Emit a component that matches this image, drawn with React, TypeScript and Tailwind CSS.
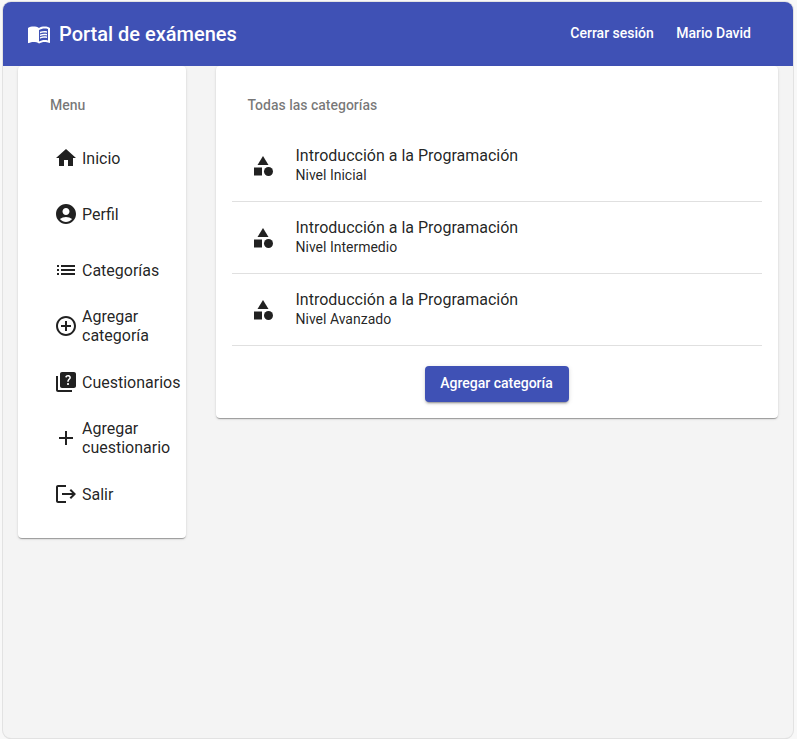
import type { IconType } from 'react-icons';
import {
  MdHome,
  MdAccountCircle,
  MdList,
  MdAddCircleOutline,
  MdQuiz,
  MdAdd,
  MdLogout,
  MdCategory,
} from 'react-icons/md';

const menu: { label: string; Icon: IconType }[] = [
  { label: 'Inicio', Icon: MdHome },
  { label: 'Perfil', Icon: MdAccountCircle },
  { label: 'Categorías', Icon: MdList },
  { label: 'Agregar categoría', Icon: MdAddCircleOutline },
  { label: 'Cuestionarios', Icon: MdQuiz },
  { label: 'Agregar cuestionario', Icon: MdAdd },
  { label: 'Salir', Icon: MdLogout },
];

const levels = ['Nivel Inicial', 'Nivel Intermedio', 'Nivel Avanzado'];

const cardShadow =
  'shadow-[0_2px_1px_-1px_rgba(0,0,0,0.2),0_1px_1px_0_rgba(0,0,0,0.14),0_1px_3px_0_rgba(0,0,0,0.12)]';

// Open book with a solid left page and lines of text on the right one.
function BookIcon() {
  return (
    <svg viewBox="0 0 24 24" fill="currentColor" className="size-6" aria-hidden="true">
      <path d="M6.5 4.5C4.55 4.5 2.45 4.9 1 6v14.65c0 .25.25.5.5.5.1 0 .15-.05.25-.05C3.1 20.45 5.05 20 6.5 20c1.95 0 4.05.4 5.5 1.5V6c-1.45-1.1-3.55-1.5-5.5-1.5z" />
      <path d="M21 5c-1.11-.35-2.33-.5-3.5-.5-1.95 0-4.05.4-5.5 1.5v15.5c1.35-.85 3.8-1.5 5.5-1.5 1.65 0 3.35.3 4.75 1.05.1.05.15.05.25.05.25 0 .5-.25.5-.5V6c-.6-.45-1.25-.75-2-1zm0 13.5c-1.1-.35-2.3-.5-3.5-.5-1.7 0-4.15.65-5.5 1.5V8c1.35-.85 3.8-1.5 5.5-1.5 1.2 0 2.4.15 3.5.5v11.5z" fillRule="evenodd" />
      <path d="M17.5 10.5c.88 0 1.73.09 2.5.26V9.24c-.79-.15-1.64-.24-2.5-.24-1.7 0-3.24.29-4.5.83v1.66c1.13-.64 2.7-.99 4.5-.99zM13 12.49v1.66c1.13-.64 2.7-.99 4.5-.99.88 0 1.73.09 2.5.26V11.9c-.79-.15-1.64-.24-2.5-.24-1.7 0-3.24.3-4.5.83zM17.5 14.33c-1.7 0-3.24.29-4.5.83v1.66c1.13-.64 2.7-.99 4.5-.99.88 0 1.73.09 2.5.26v-1.52c-.79-.16-1.64-.24-2.5-.24z" />
    </svg>
  );
}

function Header() {
  return (
    <header className="flex h-16 items-center bg-[#3f51b5] pl-6 pr-[42px] text-white">
      <BookIcon />
      <h1 className="ml-2 text-xl font-medium">Portal de exámenes</h1>
      <nav className="ml-auto flex gap-[22.5px] pb-0.5 text-sm font-medium">
        <a>Cerrar sesión</a>
        <a>Mario David</a>
      </nav>
    </header>
  );
}

function Sidebar() {
  return (
    <aside className={`h-[472px] w-[168px] rounded bg-white pt-4 ${cardShadow}`}>
      <h3 className="flex h-12 items-center pb-0.5 pl-8 text-sm font-medium text-black/54">Menu</h3>
      <ul>
        {menu.map(({ label, Icon }) => (
          <li key={label} className="flex h-14 items-center gap-1 pl-9">
            <Icon className="size-6 shrink-0" />
            <span className="w-[100px] text-base leading-[19px]">{label}</span>
          </li>
        ))}
      </ul>
    </aside>
  );
}

function Categories() {
  return (
    <main className={`flex h-[352px] w-[562px] flex-col rounded bg-white px-4 pt-4 ${cardShadow}`}>
      <h3 className="flex h-12 items-center pb-0.5 pl-[15.5px] text-sm font-medium text-black/54">
        Todas las categorías
      </h3>
      <ul className="w-[530px]">
        {levels.map((level) => (
          <li key={level} className="flex h-[72px] items-center gap-[20.5px] border-b border-black/12 pl-[19px]">
            <MdCategory className="size-6 shrink-0" />
            <div>
              <p className="text-base leading-5">Introducción a la Programación</p>
              <p className="text-sm leading-[19px]">{level}</p>
            </div>
          </li>
        ))}
      </ul>
      <button className="mt-5 h-9 w-36 self-center rounded bg-[#3f51b5] pb-0.5 pr-px text-sm font-medium text-white shadow-[0_3px_1px_-2px_rgba(0,0,0,0.2),0_2px_2px_0_rgba(0,0,0,0.14),0_1px_5px_0_rgba(0,0,0,0.12)]">
        Agregar categoría
      </button>
    </main>
  );
}

export default function App() {
  return (
    <div className="h-[739px] w-[797px] bg-[#f8f8f8] pl-[3px] pt-0.5 font-[Roboto,sans-serif] text-black/87">
      <div className="h-[736px] w-[790px] overflow-hidden rounded-lg bg-[#f4f4f4] shadow-[0_0_0_1px_#e2e2e2,0_1px_1px_0_#d4d4d4]">
        <Header />
        <div className="flex items-start gap-[30px] pl-[15px]">
          <Sidebar />
          <Categories />
        </div>
      </div>
    </div>
  );
}
